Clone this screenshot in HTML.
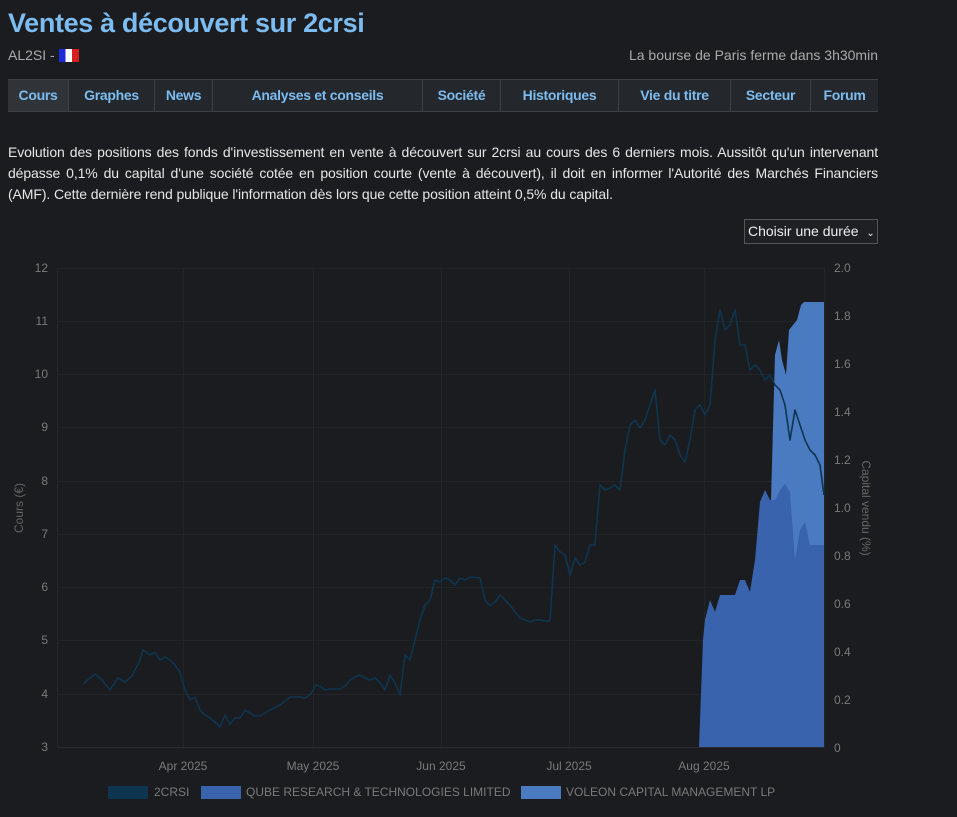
<!DOCTYPE html>
<html><head><meta charset="utf-8"><style>
*{margin:0;padding:0;box-sizing:border-box}
body{width:957px;height:817px;background:#1b1c1f;font-family:"Liberation Sans",sans-serif;color:#e6e6e6;position:relative;overflow:hidden}
h1{position:absolute;left:8px;top:8px;font-size:27px;font-weight:bold;color:#7cbcf0;letter-spacing:-0.35px}
.sub{position:absolute;left:8px;top:47px;font-size:14px;color:#aaa}
.flag{display:inline-block;width:20px;height:13px;vertical-align:-2px;background:linear-gradient(90deg,#1d2ad8 0 33%,#fff 33% 66%,#d81f1f 66%)}
.close{position:absolute;right:79px;top:47px;font-size:14px;color:#aaa}
.nav{position:absolute;left:8px;top:79px;width:870px;height:33px;display:flex;background:#24272b;border-top:1px solid #3d4045;border-bottom:1px solid #3d4045}
.nav div{height:31px;line-height:31px;text-align:center;font-size:14px;font-weight:bold;color:#7cbcf0;border-right:1px solid #3d4045;letter-spacing:-0.3px}
.nav div:last-child{border-right:none}
p{position:absolute;left:8px;top:142px;width:870px;font-size:14px;line-height:21px;text-align:justify;color:#e6e6e6;letter-spacing:-0.1px}
.sel{position:absolute;left:744px;top:219px;width:134px;height:25px;border:1px solid #555;background:#1e2024;font-size:14px;line-height:23px;padding-left:3px;color:#eee}
svg{position:absolute;left:0;top:0}
</style></head><body>
<h1>Ventes à découvert sur 2crsi</h1>
<div class="sub">AL2SI - <span class="flag"></span></div>
<div class="close">La bourse de Paris ferme dans 3h30min</div>
<div class="nav">
<div style="width:61px;background:#303338">Cours</div><div style="width:86px">Graphes</div><div style="width:58px">News</div><div style="width:210px">Analyses et conseils</div><div style="width:78px">Société</div><div style="width:118px">Historiques</div><div style="width:112px">Vie du titre</div><div style="width:80px">Secteur</div><div style="width:67px">Forum</div>
</div>
<p>Evolution des positions des fonds d'investissement en vente à découvert sur 2crsi au cours des 6 derniers mois. Aussitôt qu'un intervenant dépasse 0,1% du capital d'une société cotée en position courte (vente à découvert), il doit en informer l'Autorité des Marchés Financiers (AMF). Cette dernière rend publique l'information dès lors que cette position atteint 0,5% du capital.</p>
<div class="sel">Choisir une durée <span style="font-size:10px;margin-left:4px">&#8964;</span></div>
<svg width="957" height="817" font-family="Liberation Sans, sans-serif">
<g stroke="#222428" stroke-width="1">
<line x1="57" y1="268.5" x2="824" y2="268.5"/><line x1="57" y1="321.5" x2="824" y2="321.5"/><line x1="57" y1="374.5" x2="824" y2="374.5"/><line x1="57" y1="427.5" x2="824" y2="427.5"/><line x1="57" y1="481.5" x2="824" y2="481.5"/><line x1="57" y1="534.5" x2="824" y2="534.5"/><line x1="57" y1="587.5" x2="824" y2="587.5"/><line x1="57" y1="640.5" x2="824" y2="640.5"/><line x1="57" y1="694.5" x2="824" y2="694.5"/>
<line x1="57.5" y1="268" x2="57.5" y2="747"/><line x1="183.5" y1="268" x2="183.5" y2="747"/><line x1="313.5" y1="268" x2="313.5" y2="747"/><line x1="441.5" y1="268" x2="441.5" y2="747"/><line x1="569.5" y1="268" x2="569.5" y2="747"/><line x1="704.5" y1="268" x2="704.5" y2="747"/><line x1="824.5" y1="268" x2="824.5" y2="747"/>
</g>
<line x1="57" y1="747.5" x2="824" y2="747.5" stroke="#2a2c30"/>
<polygon fill="#4a7bc0" points="771,747 771,500 775,355 779,340 782,360 786,375 789,330 793,325 797,320 801,305 804,302 824,302 824,747"/>
<polygon fill="#3a63ae" points="699,747 703,640 705,620 710,600 715,612 720,595 735,595 740,580 745,580 750,592 755,560 760,502 765,490 770,500 775,500 780,490 785,484 790,492 795,560 800,530 805,522 810,545 824,545 824,747"/>
<polyline fill="none" stroke="#0e3550" stroke-width="1.6" stroke-linejoin="round" points="83,684 95,674 102,680 110,690 118,678 125,682 132,676 140,660 143,650 150,655 155,652 160,660 165,657 170,660 175,665 180,672 185,690 190,700 195,697 200,710 205,715 210,718 215,722 220,727 225,715 230,724 235,718 240,718 245,710 250,713 255,716 260,716 265,713 270,710 280,705 290,697 300,697 305,698 310,695 316,685 320,686 325,690 330,689 340,689 345,686 350,680 355,677 360,675 365,678 370,680 375,678 380,683 385,690 390,675 395,683 400,695 405,655 410,660 415,640 420,620 425,605 430,600 435,580 440,582 445,578 450,580 455,585 460,578 465,580 470,577 480,578 485,600 490,606 495,602 500,595 505,600 510,605 515,612 520,618 525,620 530,622 535,620 540,620 545,621 550,621 555,545 560,552 565,555 570,575 575,558 580,565 585,562 590,545 595,545 600,485 605,490 610,488 615,485 620,490 625,450 630,425 635,420 640,428 645,420 650,405 655,390 660,440 665,445 670,435 675,440 680,455 685,462 690,440 695,410 700,405 705,415 710,405 715,340 720,310 725,330 730,325 735,310 740,345 745,345 750,370 755,365 760,370 765,380 770,375 775,385 780,390 785,405 790,440 795,410 800,425 805,440 810,450 815,455 820,465 824,495"/>
<g fill="#7a7a7a" font-size="12" text-anchor="end">
<text x="48" y="272">12</text><text x="48" y="325">11</text><text x="48" y="378">10</text><text x="48" y="431">9</text><text x="48" y="485">8</text><text x="48" y="538">7</text><text x="48" y="591">6</text><text x="48" y="644">5</text><text x="48" y="698">4</text><text x="48" y="751">3</text>
</g>
<g fill="#7a7a7a" font-size="12">
<text x="834" y="272">2.0</text><text x="834" y="320">1.8</text><text x="834" y="368">1.6</text><text x="834" y="416">1.4</text><text x="834" y="464">1.2</text><text x="834" y="512">1.0</text><text x="834" y="560">0.8</text><text x="834" y="608">0.6</text><text x="834" y="656">0.4</text><text x="834" y="704">0.2</text><text x="834" y="752">0</text>
</g>
<text transform="translate(23,508) rotate(-90)" fill="#666" font-size="12" text-anchor="middle">Cours (€)</text>
<text transform="translate(862,508) rotate(90)" fill="#666" font-size="12" text-anchor="middle">Capital vendu (%)</text>
<g fill="#7a7a7a" font-size="12" text-anchor="middle">
<text x="183" y="770">Apr 2025</text><text x="313" y="770">May 2025</text><text x="441" y="770">Jun 2025</text><text x="569" y="770">Jul 2025</text><text x="704" y="770">Aug 2025</text>
</g>
<rect x="108" y="786" width="40" height="13" fill="#0e3550"/>
<text x="154" y="796" fill="#7a7a7a" font-size="12">2CRSI</text>
<rect x="201" y="786" width="40" height="13" fill="#3a63ae"/>
<text x="246" y="796" fill="#7a7a7a" font-size="12">QUBE RESEARCH &amp; TECHNOLOGIES LIMITED</text>
<rect x="521" y="786" width="40" height="13" fill="#4a7bc0"/>
<text x="566" y="796" fill="#7a7a7a" font-size="12">VOLEON CAPITAL MANAGEMENT LP</text>
</svg>
</body></html>
